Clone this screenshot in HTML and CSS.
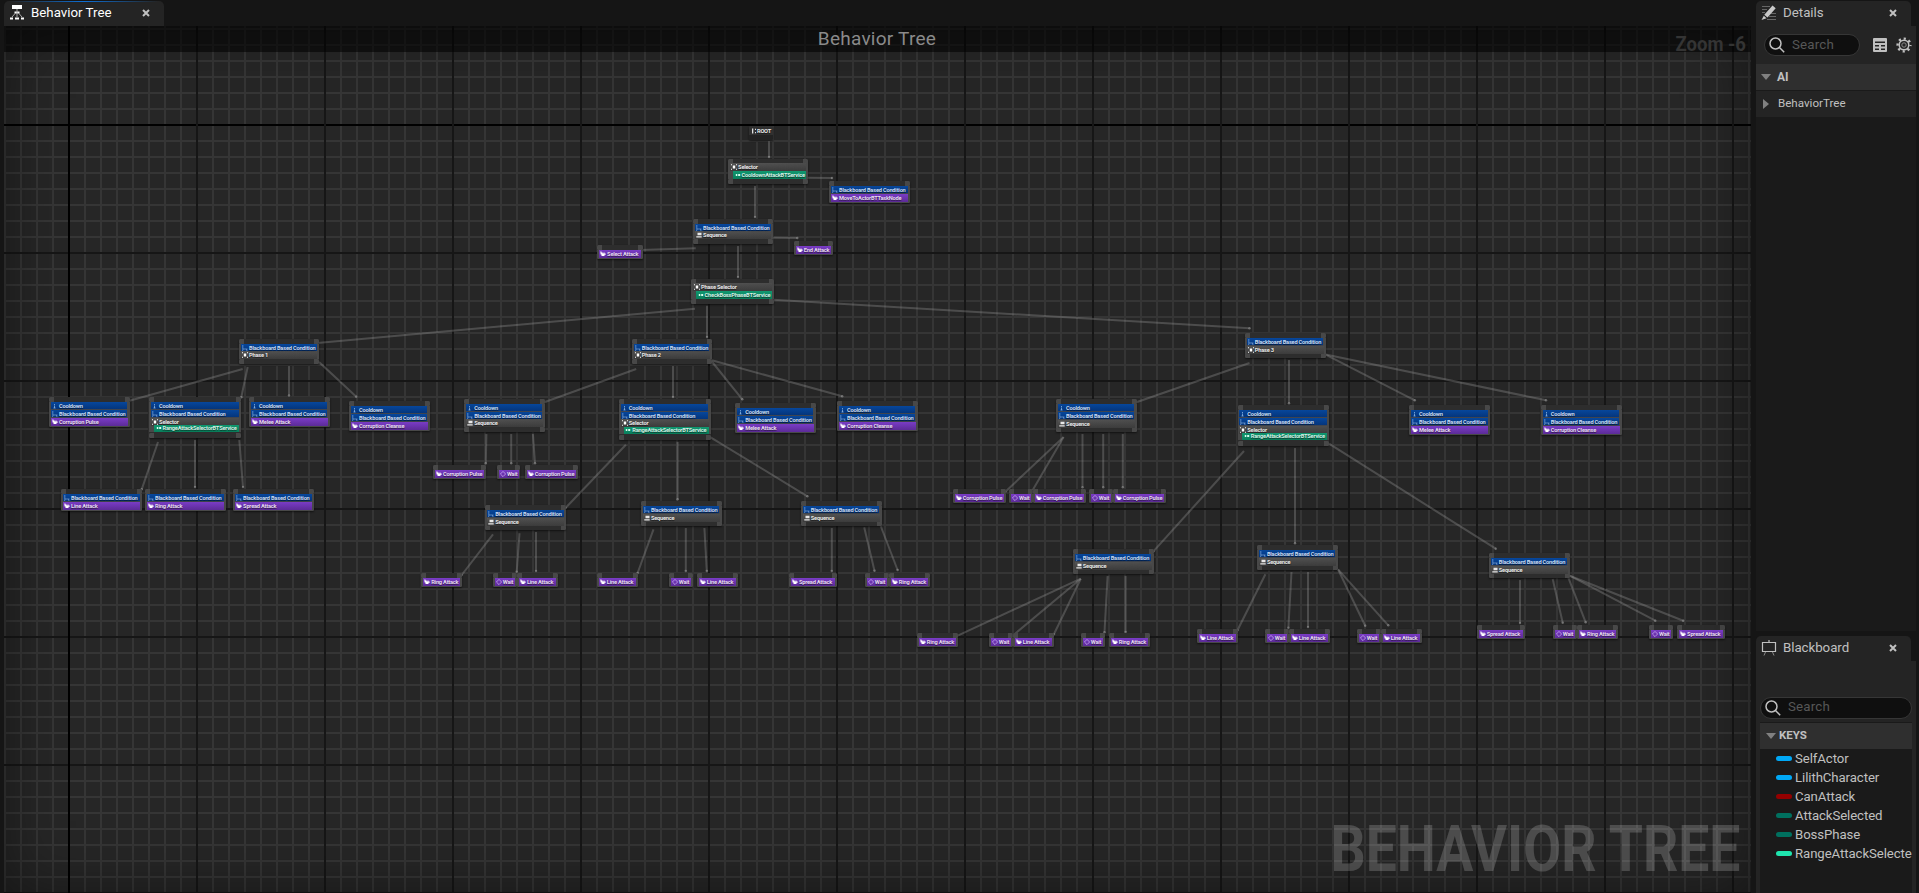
FILE: index.html
```html
<!DOCTYPE html>
<html lang="en">
<head>
<meta charset="utf-8">
<title>Behavior Tree</title>
<link rel="stylesheet" href="styles.css">
</head>
<body>
<main class="editor">
  <section class="graph-panel">
    <div class="tab-strip">
      <div class="tab tab-active tab-graph">
        <svg class="tab-icon" width="14" height="15" viewBox="0 0 14 15"><path fill="#fff" d="M2 0h10v4H2zM4.500 6.500h5v2h-5zM0 12.500h3v2H0zM5 12.500h4v2H5zM11 12.500h3v2h-3z"/><path stroke="#aaa" fill="none" d="M7 4v8M5.500 8l-3.500 4M8.500 8l3.500 4"/></svg>
        <span class="tab-title">Behavior Tree</span>
        <svg class="close" width="8" height="8" viewBox="0 0 8 8"><path d="M1 1l6 6M7 1l-6 6"/></svg>
      </div>
    </div>
    <div class="graph">
      <div class="axis axis-h"></div>
      <div class="grid-major-v"></div>
      <div class="axis axis-v"></div>
      <svg class="wires" id="wires"></svg>
      <div class="nodes" id="nodes"></div>
      <div class="vignette"></div>
      <div class="watermark">BEHAVIOR TREE</div>
      <header class="graph-title">Behavior Tree</header>
      <div class="zoom-label">Zoom -6</div>
    </div>
  </section>
  <aside class="sidebar">
    <section class="details">
      <div class="tab-strip">
        <div class="tab tab-side">
          <svg class="tab-icon" width="16" height="16" viewBox="0 0 16 16"><path stroke="#666" stroke-width="1.200" d="M1 1.500h8M1 4.500h5M1 7.500h3M10 8.500h5M8 11.500h7M6 14.500h9"/><path fill="#c8c8c8" d="M11.500 0.500l3.200 2.700-8.200 9.300-3.200-2.700zM2.800 10.800l2.700 2.400L.5 15z"/></svg>
          <span class="tab-title">Details</span>
          <svg class="close" width="8" height="8" viewBox="0 0 8 8"><path d="M1 1l6 6M7 1l-6 6"/></svg>
        </div>
      </div>
      <div class="toolbar">
        <div class="search">
          <svg width="16" height="16" viewBox="0 0 16 16"><circle cx="6.500" cy="6.500" r="5.500"/><path d="M10.500 10.500l4.700 4.700"/></svg>
          <span>Search</span>
        </div>
        <svg class="table-icon" width="14" height="14" viewBox="0 0 14 14"><rect width="14" height="14" rx="1" fill="#c0c0c0"/><path fill="#242424" d="M2 3.500h10v1.500H2zM2 7h4v1.500H2zM8 7h4v1.500H8zM2 10.500h4V12H2zM8 10.500h4V12H8z"/></svg>
        <svg class="gear-icon" width="16" height="16" viewBox="0 0 16 16"><circle cx="8" cy="8" r="6.400" stroke-width="2.400" stroke-dasharray="2.200 2.827" stroke-dashoffset="1.100"/><circle cx="8" cy="8" r="4.800" stroke-width="1.500"/><circle cx="8" cy="8" r="2.200" stroke-width="1" stroke="#888"/></svg>
      </div>
      <div class="category"><i class="arrow-down"></i><b>AI</b></div>
      <div class="property"><i class="arrow-right"></i><span>BehaviorTree</span></div>
    </section>
    <section class="blackboard">
      <div class="tab-strip">
        <div class="tab tab-side">
          <svg class="tab-icon" width="16" height="16" viewBox="0 0 16 16"><path stroke="#c0c0c0" fill="none" stroke-width="1.200" d="M1.500 2.500h13v9h-13zM8 0v2"/><path stroke="#888" d="M4.500 12l-1.500 3.500M11.500 12l1.500 3.500"/></svg>
          <span class="tab-title">Blackboard</span>
          <svg class="close" width="8" height="8" viewBox="0 0 8 8"><path d="M1 1l6 6M7 1l-6 6"/></svg>
        </div>
      </div>
      <div class="board">
        <div class="search">
          <svg width="16" height="16" viewBox="0 0 16 16"><circle cx="6.500" cy="6.500" r="5.500"/><path d="M10.500 10.500l4.700 4.700"/></svg>
          <span>Search</span>
        </div>
        <div class="keys-header"><i class="arrow-down"></i><b>KEYS</b></div>
        <ul class="keys">
          <li><i class="pill object"></i>SelfActor</li>
          <li><i class="pill object"></i>LilithCharacter</li>
          <li><i class="pill bool"></i>CanAttack</li>
          <li><i class="pill enum"></i>AttackSelected</li>
          <li><i class="pill enum"></i>BossPhase</li>
          <li><i class="pill int"></i>RangeAttackSelected</li>
        </ul>
      </div>
    </section>
  </aside>
</main>
<script src="graph.js"></script>
</body>
</html>
```
FILE: styles.css
```css
* { box-sizing: border-box; }
body {
  margin: 0;
  background: #151515;
  color: #c0c0c0;
  font-family: Roboto, "Liberation Sans", sans-serif;
  font-size: 13.3px;
  overflow: hidden;
}
.editor { display: flex; height: 893px; width: 1919px; }
.graph-panel { display: flex; flex-direction: column; width: 1751px; padding-left: 4px; }
.tab-strip { height: 26px; padding-top: 1px; flex: none; }
.tab {
  display: flex;
  align-items: center;
  height: 25px;
  background: #242424;
  border-radius: 5px 5px 0 0;
  padding: 0 14px 2px 5px;
  position: relative;
}
.tab-graph { width: 160px; color: #fff; }
.tab-active::before {
  content: "";
  position: absolute;
  left: 6px; right: 6px; top: 0;
  height: 1px;
  background: linear-gradient(90deg, transparent, #0d6fd6 50%, transparent);
}
.tab-graph .tab-icon { margin-left: 1px; }
.tab-title { margin-left: 7px; flex: 1; letter-spacing: 0; line-height: 15px; padding-bottom: 1px; }
.close { stroke: #c0c0c0; stroke-width: 2; fill: none; }

.graph {
  position: relative;
  flex: 1;
  overflow: hidden;
  background-color: #262626;
  background-image:
    linear-gradient(#161616 2px, transparent 2px),
    linear-gradient(#353535 2px, transparent 2px),
    linear-gradient(90deg, #353535 2px, transparent 2px);
  background-size: 128px 128px, 16px 16px, 16px 16px;
  background-position: 0 98px, 0 2px, 0 0;
}
.grid-major-v {
  position: absolute;
  inset: 0;
  background: linear-gradient(90deg, #161616 2px, transparent 2px) 64px 0 / 128px 128px;
}
.axis { position: absolute; background: #000; }
.axis-h { left: 0; right: 0; top: 98px; height: 2px; }
.axis-v { top: 0; bottom: 0; left: 64px; width: 2px; }
.wires { position: absolute; left: -4px; top: -26px; width: 1919px; height: 893px; }
.wires line { stroke: #a0a0a0; stroke-opacity: .32; stroke-width: 2; }
.wires circle { fill: #a0a0a0; fill-opacity: .55; }
.nodes { position: absolute; left: -4px; top: -26px; }
.vignette {
  position: absolute;
  inset: 0;
  box-shadow: inset 0 0 60px rgba(0, 0, 0, .45);
}
.graph-title {
  position: absolute;
  left: 0; right: 0; top: 0;
  height: 26px;
  line-height: 26px;
  padding-right: 1px;
  text-align: center;
  font-size: 19px;
  letter-spacing: .25px;
  color: #8a8a8a;
  background: rgba(0, 0, 0, .55);
}
.zoom-label {
  position: absolute;
  right: 5px; top: 6px;
  font-size: 21px;
  line-height: 24px;
  font-weight: 700;
  color: #343434;
  transform: scaleX(.88);
  transform-origin: right;
}
.watermark {
  position: absolute;
  right: 11px; bottom: 12px;
  font-size: 64.500px;
  line-height: 64px;
  font-weight: 700;
  color: rgba(255, 255, 255, .18);
  white-space: nowrap;
  transform: scaleX(.855);
  transform-origin: right;
}

.node {
  position: absolute;
  background: #2d2d2d;
  border-radius: 1.5px;
  padding: 5px 1.8px 1px;
  box-shadow: 0 1px 2px rgba(0, 0, 0, .55);
}
.node::before, .node::after {
  content: "";
  position: absolute;
  left: 0; right: 0;
  height: 5px;
  border: solid #484848;
  border-width: 0 5px;
  border-radius: 1.5px;
}
.node::before { top: 0; }
.node::after { bottom: 0; }
.node .body { position: relative; z-index: 1; margin: 0 -1.8px; padding: 0 1.8px; background: #484848; }
.node.leaf { background: linear-gradient(#2d2d2d 5px, #484848 5px); }
.node.leaf::after, .node.root::after { display: none; }
.node.upper { padding-top: 4px; }
.node.root { padding-top: 1px; background: linear-gradient(#303030 9px, #222 9px); }
.node.root::before { display: none; }
.row {
  display: flex;
  align-items: center;
  height: 8px;
  padding-left: 1px;
  color: #e8e8e8;
  font-size: 5.7px;
  font-weight: 700;
  letter-spacing: -.22px;
  line-height: 8px;
  white-space: nowrap;
  text-shadow: 0 .5px 1px rgba(0, 0, 0, .6);
}
.row svg { flex: none; width: 6px; height: 6px; margin-right: 1px; }
.row.deco { background: linear-gradient(#07479c, #04357c); border-bottom: 1px solid #40454e; margin-right: .5px; color: #c8dcf5; }
.row.task { background: linear-gradient(#7a3cc6, #5c2b98); color: #e6dcf2; height: 7.5px; }
.row.comp { background: linear-gradient(90deg, rgba(64,64,64,0), rgba(64,64,64,.4)), linear-gradient(#555, #3a3a3a); height: 7.5px; }
.row.serv { background: linear-gradient(#109870, #0a7f5c); margin-left: 3px; height: 7.5px; padding-left: 1.5px; color: #d4f2e6; }
.row.tight { margin-top: -.8px; }
.upper .row.serv { margin-top: .5px; }
.row.rootrow { padding-left: 0; height: 8px; margin-left: .5px; }
.row.rootrow svg { margin-right: 0; }

.sidebar { display: flex; flex-direction: column; width: 160px; margin-left: 5px; }
.tab-side { width: 155px; padding-left: 5px; padding-right: 14px; }
.tab-side .tab-title { margin-left: 6px; letter-spacing: 0; }
.details { height: 636px; flex: none; background: linear-gradient(#151515 26px, #1a1a1a 26px 631px, #151515 631px); }
.details .toolbar, .details .category, .details .property, .board { width: 160px; }
.toolbar { display: flex; align-items: center; height: 38px; padding: 0 4px 0 8px; background: #242424; }
.search {
  display: flex;
  align-items: center;
  height: 22px;
  padding-left: 4px;
  background: #0f0f0f;
  border: 1px solid #363636;
  border-radius: 11px;
  color: #575757;
  letter-spacing: .2px;
}
.search span { padding-bottom: 2px; }
.search svg { stroke: #c0c0c0; stroke-width: 1.5; fill: none; margin-right: 7px; }
.board .search span { padding-bottom: 3px; }
.toolbar .search { width: 96px; }
.table-icon { margin-left: 13px; }
.gear-icon { margin-left: 9px; fill: none; stroke: #c0c0c0; flex: none; }
.category, .property { display: flex; align-items: center; font-size: 12px; }
.category { height: 26px; background: #2f2f2f; padding-left: 5px; }
.category b { margin-left: 6px; padding-bottom: 1px; }
.property { height: 27px; background: #242424; border-top: 1px solid #1a1a1a; padding-left: 7px; }
.property span { margin-left: 9px; font-size: 11.600px; padding-bottom: 2px; }
.arrow-down { border: 5px solid transparent; border-top: 6px solid #808080; border-bottom: 0; }
.arrow-right { border: 5px solid transparent; border-left: 6px solid #808080; border-right: 0; }
.blackboard { flex: 1; display: flex; flex-direction: column; }
.blackboard .tab-strip { height: 25px; padding-top: 0; }
.blackboard .tab-title { letter-spacing: -.05px; }
.board { flex: 1; background: #242424; padding: 36px 4px 0; display: flex; flex-direction: column; }
.board .search { flex: none; }
.keys-header { display: flex; align-items: center; height: 27px; margin-top: 3px; border-top: 1px solid #1a1a1a; background: #2f2f2f; padding-left: 6px; font-size: 11.500px; }
.keys-header b { margin-left: 3px; padding-bottom: 2px; }
.keys { list-style: none; margin: 0; padding: 0 0 0 16px; flex: 1; background: #1a1a1a; overflow: hidden; }
.keys li { display: flex; align-items: center; height: 19px; white-space: nowrap; font-size: 13.2px; letter-spacing: -.08px; }
.pill { width: 16px; height: 5px; border-radius: 3px; margin-right: 3px; flex: none; }
.object { background: #00a8f6; }
.bool { background: #940000; }
.enum { background: #00705f; }
.int { background: #1fe4ae; }
```
FILE: graph.js
```js
// Icon markup per row kind, drawn on a 6x6 grid.
const ICONS = {
  board: '<path fill="none" stroke="#9cc4f0" stroke-width=".7" stroke-opacity=".8" d="M.8 0v4h4.700M1 4l-.5 2M4.500 4l.5 2"/>',
  timer: '<path fill="none" stroke="#9cc4f0" stroke-width="1" stroke-opacity=".7" d="M2.500 1v1M2.500 2.500v2.500M1.500 5h2"/>',
  task: '<path fill="#fff" d="M.3 .6h1.200v1h1.200v.8h.8v-1h1v1h1.200v1.400H4.500v1.200H1.500V3.600H.6z"/>',
  wait: '<path fill="none" stroke="#c8a8f0" stroke-width=".8" d="M3 .4L5.600 3 3 5.600 .4 3z"/>',
  selector: '<path fill="#fff" d="M1.800 1.500h2.400v3H1.800zM0 .3h1v1H0zM5 .3h1v1H5zM0 4.700h1v1H0zM5 4.700h1v1H5z"/>',
  sequence: '<path fill="#e8e8e8" d="M1.500 .8h4v2.500h-4zM.3 4.200h5.400v1.300H.3z"/>',
  service: '<path fill="#d8fff0" d="M.8 2h1.500v2H.8zM3.200 2h2v2h-2z"/>',
  root: '<path fill="#ddd" d="M1 .5h1.300v5H1zM4 .8h1v1.200H4zM4 4h1v1.200H4z"/>'
};

const row = (kind, icon, text) => ({ kind, icon, text });
const tight = r => ({ ...r, kind: r.kind + ' tight' });
const CD = row('deco', 'timer', 'Cooldown');
const BB = row('deco', 'board', 'Blackboard Based Condition');
const SEQ = row('comp', 'sequence', 'Sequence');
const sel = t => row('comp', 'selector', t);
const srv = t => row('serv', 'service', t);
const task = t => row('task', t === 'Wait' ? 'wait' : 'task', t);
const RANGE = [CD, BB, sel('Selector'), tight(srv('RangeAttackSelectorBTService'))];

// x, y, width, height, rows
const NODES = [
  [748.7, 126, 24.7, 13.5, [row('rootrow', 'root', 'ROOT')]],
  [728.3, 159, 79.7, 25, [sel('Selector'), srv('CooldownAttackBTService')]],
  [829.3, 181, 80.7, 22, [BB, task('MoveToActorBTTaskNode')]],
  [693.3, 219, 79.7, 25, [BB, tight(SEQ)]],
  [597.3, 245, 45.3, 14, [task('Select Attack')]],
  [794, 241, 39, 14, [task('End Attack')]],
  [691.3, 279, 82.3, 25, [sel('Phase Selector'), srv('CheckBossPhaseBTService')]],

  [239.3, 339, 79.7, 25, [BB, tight(sel('Phase 1'))]],
  [49.3, 397, 80.3, 30, [CD, BB, task('Corruption Pulse')]],
  [149.3, 397, 91.7, 41, RANGE],
  [249.3, 397, 80.3, 30, [CD, BB, task('Melee Attack')]],
  [349.3, 401, 80.3, 30, [CD, BB, task('Corruption Cleanse')]],
  [61.3, 489, 80.7, 22, [BB, task('Line Attack')]],
  [145.3, 489, 80.7, 22, [BB, task('Ring Attack')]],
  [233.3, 489, 80.7, 22, [BB, task('Spread Attack')]],

  [632, 339, 79.7, 25, [BB, tight(sel('Phase 2'))]],
  [464.4, 399, 80.3, 33, [CD, BB, tight(SEQ)]],
  [619, 399, 91.7, 41, [CD, BB, tight(sel('Selector')), srv('RangeAttackSelectorBTService')]],
  [735.4, 403, 80.3, 30, [CD, BB, task('Melee Attack')]],
  [837.3, 401, 80.3, 30, [CD, BB, task('Corruption Cleanse')]],
  [433.1, 465, 52.7, 14, [task('Corruption Pulse')]],
  [497.1, 465, 23.4, 14, [task('Wait')]],
  [525, 465, 52.7, 14, [task('Corruption Pulse')]],
  [485.4, 505, 80.5, 25, [BB, SEQ]],
  [641.1, 501, 80.5, 25, [BB, SEQ]],
  [801, 501, 80.5, 25, [BB, SEQ]],
  [421.4, 573, 40.7, 14, [task('Ring Attack')]],
  [493, 573, 23.5, 14, [task('Wait')]],
  [517.1, 573, 40.7, 14, [task('Line Attack')]],
  [597, 573, 40.7, 14, [task('Line Attack')]],
  [669, 573, 23.5, 14, [task('Wait')]],
  [697, 573, 40.7, 14, [task('Line Attack')]],
  [789.1, 573, 47.7, 14, [task('Spread Attack')]],
  [865, 573, 23.5, 14, [task('Wait')]],
  [889, 573, 40.7, 14, [task('Ring Attack')]],

  [1245, 333, 80.6, 25, [BB, sel('Phase 3')]],
  [1056.3, 399, 80.3, 33, [CD, BB, SEQ]],
  [1237.5, 405, 91.7, 41, RANGE],
  [1409.3, 405, 80.7, 30, [CD, BB, task('Melee Attack')]],
  [1541, 405, 80.7, 30, [CD, BB, task('Corruption Cleanse')]],
  [953, 489, 52.7, 14, [task('Corruption Pulse')]],
  [1009.2, 489, 23.5, 14, [task('Wait')]],
  [1033, 489, 52.7, 14, [task('Corruption Pulse')]],
  [1089, 489, 23.5, 14, [task('Wait')]],
  [1113, 489, 52.7, 14, [task('Corruption Pulse')]],
  [1073, 549, 80.7, 25, [BB, SEQ]],
  [1257.1, 545, 80.7, 25, [BB, SEQ]],
  [1489, 553, 80.7, 25, [BB, SEQ]],
  [917, 633, 40.7, 14, [task('Ring Attack')]],
  [989, 633, 23.5, 14, [task('Wait')]],
  [1013, 633, 40.7, 14, [task('Line Attack')]],
  [1081, 633, 23.5, 14, [task('Wait')]],
  [1109, 633, 40.7, 14, [task('Ring Attack')]],
  [1197, 629, 40.7, 14, [task('Line Attack')]],
  [1265, 629, 23.5, 14, [task('Wait')]],
  [1289, 629, 40.7, 14, [task('Line Attack')]],
  [1357, 629, 23.5, 14, [task('Wait')]],
  [1381, 629, 40.7, 14, [task('Line Attack')]],
  [1477, 625, 47.7, 14, [task('Spread Attack')]],
  [1553, 625, 23.5, 14, [task('Wait')]],
  [1577.3, 625, 40.7, 14, [task('Ring Attack')]],
  [1649.3, 625, 23.5, 14, [task('Wait')]],
  [1677.3, 625, 47.7, 14, [task('Spread Attack')]]
];

// x1, y1, x2, y2
const WIRES = [
  [769, 141, 769, 157], [755, 186, 755, 217], [808, 177.7, 832, 178], [773, 237.7, 797.3, 238],
  [695.7, 248.3, 640, 250], [738, 246, 738, 277], [695, 308.7, 317.3, 343], [707, 305.7, 707, 337],
  [773.7, 299.7, 1249.5, 328.3],
  [242.7, 369, 127.7, 401.3], [247.7, 367, 241.3, 397.3], [289, 366, 289, 395.5], [319, 362, 356.3, 396.7],
  [158, 442, 141.7, 489.3], [195, 440, 195, 487], [239.3, 440, 243, 487],
  [636.2, 369, 542.9, 402.7], [673, 366, 673, 397], [711, 360.5, 742.3, 399.3], [711, 360, 842.2, 396.3],
  [486.4, 434, 485.8, 463.3], [511.2, 434, 511.2, 463.3], [532.9, 434, 535, 463.3],
  [625.9, 444.7, 565.7, 507.7], [677.6, 442, 677.6, 499.3], [710.6, 437.3, 807.4, 496.3],
  [493, 534.3, 461.7, 575], [519.5, 533.3, 516.7, 571.7], [536, 532, 536, 571],
  [653.5, 529.3, 637.6, 573], [685.8, 528, 685.8, 571], [704.4, 528, 706.8, 571],
  [831.8, 528, 831.8, 571], [864.2, 527.3, 874.5, 570.7], [880.7, 526, 897.6, 570],
  [1249.5, 363, 1134.2, 403], [1289, 360, 1289, 403.3], [1325.6, 354.7, 1414.8, 400.3], [1325.6, 354.5, 1546, 400.3],
  [1063.6, 437, 1005.4, 491.7], [1063.6, 437, 1032.6, 490.3], [1082.5, 434, 1082.5, 487.3],
  [1103.2, 434, 1103.2, 487.3], [1122.8, 434, 1122.8, 487.3],
  [1244, 451, 1153.4, 551.3], [1295, 448, 1295, 543.3], [1329, 443.7, 1495.7, 548.7],
  [1080.8, 578.7, 956.1, 636.3], [1080.8, 578.7, 1012.6, 635.7], [1080.8, 578.7, 1053.9, 634.3],
  [1107.6, 576, 1104.5, 632.3], [1125.6, 576, 1125.6, 632],
  [1265.4, 574.3, 1237.5, 630.3], [1291.5, 572, 1288.4, 627.7], [1308, 572, 1308, 627],
  [1338, 569.3, 1365.2, 625.7], [1338, 569.3, 1388.3, 625.3],
  [1520, 580, 1520, 623], [1552.7, 579, 1562.7, 622.7], [1568.3, 577.7, 1585.7, 622.3],
  [1569.7, 575.7, 1655.3, 620.7], [1569.7, 575.7, 1683.3, 620.7]
];

const nodeType = rows => {
  const last = rows[rows.length - 1].kind;
  if (last === 'task') return 'leaf';
  if (last === 'rootrow') return 'root';
  return rows[0].kind === 'comp' ? 'composite upper' : 'composite';
};

document.getElementById('nodes').innerHTML = NODES.map(([x, y, w, h, rows]) => {
  const body = rows.map(r =>
    `<div class="row ${r.kind}"><svg viewBox="0 0 6 6">${ICONS[r.icon]}</svg><span>${r.text}</span></div>`).join('');
  const type = nodeType(rows);
  return `<div class="node ${type}" style="left:${x}px;top:${y}px;width:${w}px;height:${h}px">` +
    (type === 'root' ? body : `<div class="body">${body}</div>`) + '</div>';
}).join('');

document.getElementById('wires').innerHTML = WIRES.map(([a, b, c, d]) =>
  `<line x1="${a}" y1="${b}" x2="${c}" y2="${d}"/><circle cx="${c}" cy="${d}" r="1.200"/>`).join('');
```
